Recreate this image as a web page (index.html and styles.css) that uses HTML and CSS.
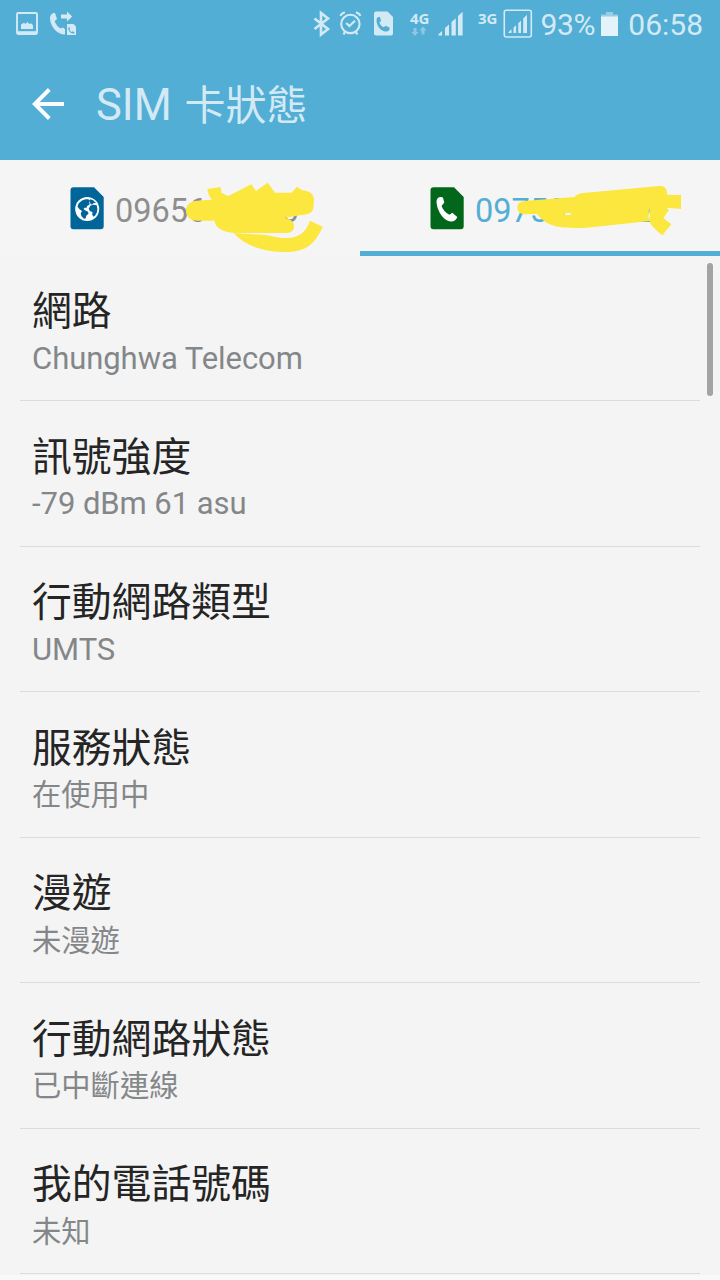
FILE: index.html
```html
<!DOCTYPE html>
<html lang="zh-Hant">
<head>
<meta charset="utf-8">
<title>SIM 卡狀態</title>
<link rel="stylesheet" href="styles.css">
</head>
<body>
<div class="screen">
  <header class="top">
    <div class="status">
      <svg class="status-icons" viewBox="0 0 540 48" width="540" height="48">
        <g fill="none" stroke="#d3eaf5">
          <rect x="17" y="13" width="20" height="21" rx="1.2" stroke-width="1.9"/>
          <path d="M17 32.7h20" stroke-width="3"/>
          <path d="M314.500 18.500l13.500 10.500-7 5.500V13l7 5.500-13.500 10.500" stroke-width="2.600"/>
          <circle cx="350.4" cy="23.9" r="9.2" stroke-width="2.100"/>
          <path d="M346.200 23l3.200 3 5.600-5.300M340.2 15.8q1.500-2.700 4.700-3.600M360.600 15.800q-1.500-2.700-4.700-3.600M345 31.800l-1.500 2.800M355.800 31.800l1.500 2.800" stroke-width="2.200"/>
          <rect x="504.300" y="10.300" width="27" height="26.700" rx="2" stroke-width="1.600"/>
        </g>
        <g fill="#d3eaf5">
          <path d="M21 29v-4.500l3-1.800 1.500 1.300 1.800-2 2 2 1.700-.8 2 2V29z"/>
          <path d="M53 13l2 0 2 6-2.300 2c.8 3.200 3.300 6 6 7.500l2.300-1 2 1.800v5.200c-7 .2-14.800-7-15-16.500 0-2 1-3.500 3-5z"/>
          <path d="M61 14.500h6v-3l5.200 5-5.200 5v-3h-6z"/>
          <path d="M67 24h6.500l2.500 2.500V35h-9z"/>
          <path d="M376 11.500h11.500l5.500 5.500V33.500q0 2-2 2H376q-2 0-2-2V13.500q0-2 2-2z"/>
          <path d="M438.500 35.500v-1.300l3.500-3.200v4.500zM445 35.500v-7.500l4-3.500v11zM451.500 35.500V22l4.300-3.800v17.300zM458 35.500v-19.500l4.600-4.200v23.700z"/>
          <path d="M508.500 33v-1l3-2.700V33zM513.500 33v-5.500l2.600-2.300V33zM518.300 33v-9.700l2.700-2.500V33zM523.200 33V18.500l3.800-3.700V33z"/>
        </g>
        <path transform="translate(376.500 17)" fill="#52aed5" d="M1.800 0l1.600 0 1.200 4-1.700 1.400c.7 2.200 2.400 4 4.500 4.800L9 8.700l4 1.700v2C12 14.500 9.500 15.200 7 14 2.500 12 .200 8 0 3.500 0 1.800.6.500 1.800 0z"/>
        <path transform="translate(68.300 27)" fill="#52aed5" d="M.8 0l1 2-.7.7c.5 1 1.300 1.900 2.300 2.300l.8-.7 1.900.9v1C3 7.500-.5 4 0 .8z"/>
        <path fill="#8ac8e3" d="M413.500 28h3v4h2.200l-3.700 4-3.700-4h2.200zM421.500 34.500h3v-4h2.200l-3.700-4-3.700 4h2.200z"/>
      </svg>
      <span class="net net-4g">4G</span>
      <span class="net net-3g">3G</span>
      <div class="readout">
        <span class="percent">93%</span>
        <svg class="battery" viewBox="0 0 17 24" width="17" height="24"><path fill="#96cee6" d="M5 0h7v2.500h5V5H0V2.500h5z"/><path fill="#e4f3f9" d="M0 4.500h17V24H0z"/></svg>
        <span class="clock">06:58</span>
      </div>
    </div>
    <div class="appbar">
      <svg class="back" viewBox="0 0 34 34" width="34" height="34"><path d="M18.300 2.500L3.800 17l14.500 14.500M4 17h29" fill="none" stroke="#fbfdfe" stroke-width="3.900"/></svg>
      <h1 class="title">SIM <span class="title-cjk">卡狀態</span></h1>
    </div>
  </header>
  <nav class="tabs">
    <div class="tab">
      <svg class="sim" viewBox="0 0 34 43" width="34" height="43">
        <path fill="#006699" d="M3.500 .3h20.500L33.700 10V39.300q0 3-3 3H3.500q-3 0-3-3V3.300q0-3 3-3z"/>
        <circle cx="17.200" cy="22" r="12" fill="#fff"/>
        <path fill="#006699" d="M15.500 12.300l-3.500 1.300-3.500 3-1 3.200 2 2.400 2.500 1.800-1.300 2.500.8 2.800 2.500 2.500 1.500-.3 1-3 2-1.800-.5-2-3-1.500-1.500-1.300 1.500-1.300 1.300.6.800-2.200 2.700-1.800-.8-2 .8-1.600-1.500-1.300zM20 12.300l2.800.8 3.200 2.900-2.800.3-1 1.400-1.700-.9-1-2zM20.500 18.500l3-.8 3.200.6.700 3.700-.6 3.600-1.600 2.900-1.800 1.200-1.200-2.200.3-2.600-2.500-.6-1.300-2.500z"/>
      </svg>
      <span class="number">09656<span class="last-a">6</span></span>
      <svg class="scribble scribble-a" viewBox="0 0 450 255" width="150" height="85">
        <g fill="#fbe73d">
          <path d="M82 42l40-6 2 17 21 10 69-35 14 20 35-25 22 30h50l16-18 15 11c20 0 36 11 36 29l-2 25q-4 16-20 18l-66 10c20 5 28 12 28 25 0 14-9 21-24 21H165c-38-3-61-17-61-37H52c-22 0-34-13-34-31 0-17 14-28 34-29l44-3q-12-12-14-32z"/>
          <path d="M161 174l97 6c55 14 90 13 111-8 10-9 16-21 21-35l38 18c-22 52-52 76-112 76-68 0-122-20-155-57z"/>
        </g>
      </svg>
    </div>
    <div class="tab tab-active">
      <svg class="sim" viewBox="0 0 34 43" width="34" height="43">
        <path fill="#03671b" d="M3.500 .3h20.500L33.700 10V39.300q0 3-3 3H3.500q-3 0-3-3V3.300q0-3 3-3z"/>
        <path fill="#fff" d="M9 10.300q3-.9 4 .5l1.300 4.700-2.800 3.500c1.500 4 4.300 7.200 8 8.700l2.800-1.900 5 4.200c-1.800 4.800-6.300 5.500-10.500 3.200C11.500 30.500 7 22.500 6.500 15c0-2 1-4 2.500-4.700z"/>
      </svg>
      <span class="number">09758<span class="last-b">2</span></span>
      <svg class="scribble scribble-b" viewBox="0 0 540 225" width="180" height="75">
        <g fill="#fbe73d">
          <path fill-rule="evenodd" d="M42 78l152-12q8-11 26-12l228-21c15-2 24 8 23 26l42 1v42l-44-4 8 7-17 24 24 19-27 33c-21-17-36-31-38-43l-162 17c-45 7-97 4-122-2-27-7-43-22-54-36l-36 1c-15-1-23-9-23-20s8-19 20-20zM163 120h17l5-7-22 2zM417 92l3 34-4 6z"/>
        </g>
      </svg>
    </div>
  </nav>
  <main class="list">
    <section class="row"><h2>網路</h2><p class="latin">Chunghwa Telecom</p></section>
    <section class="row"><h2>訊號強度</h2><p class="latin">-79 dBm 61 asu</p></section>
    <section class="row"><h2>行動網路類型</h2><p class="latin">UMTS</p></section>
    <section class="row"><h2>服務狀態</h2><p>在使用中</p></section>
    <section class="row"><h2>漫遊</h2><p>未漫遊</p></section>
    <section class="row"><h2>行動網路狀態</h2><p>已中斷連線</p></section>
    <section class="row"><h2>我的電話號碼</h2><p>未知</p></section>
    <div class="scrollbar"></div>
  </main>
</div>
</body>
</html>
```
FILE: styles.css
```css
* { box-sizing: border-box; }
body { margin: 0; font-family: Roboto, "Noto Sans CJK TC", sans-serif; }
h1, h2, p { margin: 0; font-weight: 400; }
.screen { width: 720px; height: 1280px; overflow: hidden; background: #f9f9f9; }
.top { height: 160px; background: #52aed5; }
.status { position: relative; height: 48px; display: flex; justify-content: flex-end; padding-right: 17px; color: #d3eaf5; }
.status-icons { position: absolute; left: 0; top: 0; }
.net { position: absolute; top: 9px; font: 700 15px/18px "Open Sans", "Noto Sans", sans-serif; }
.net-4g { left: 410px; }
.net-3g { left: 478px; }
.readout { display: flex; align-items: center; gap: 7px; font-size: 30px; line-height: 48px; padding-top: 1px; }
.percent { letter-spacing: -0.3px; }
.battery { flex: none; margin: 0 3px 2px -1px; }
.appbar { height: 112px; display: flex; align-items: center; padding-left: 31px; }
.back { flex: none; }
.title { margin: 4px 0 0 31px; font-size: 43.5px; line-height: 56px; color: #d3eaf5; display: flex; white-space: pre; }
.title-cjk { font-size: 41px; margin-left: 2px; }
.tabs { height: 96px; display: flex; background: #f5f5f5; }
.tab { position: relative; width: 360px; display: flex; align-items: flex-start; padding: 27px 0 0 70px; color: #8e8e8e; }
.tab-active { border-bottom: 5px solid #52aed5; color: #52aed5; }
.sim { flex: none; }
.number { margin: 2px 0 0 11px; font-size: 32.5px; line-height: 44px; display: flex; }
.last-a { margin-left: 74px; }
.last-b { margin-left: 71px; }
.scribble { position: absolute; top: 15px; }
.scribble-a { left: 180px; }
.scribble-b { left: 150px; }
.list { position: relative; }
.row { height: 145.5px; padding: 25px 32px 0; background: linear-gradient(#dcdcdc, #dcdcdc) 20px 100% / 680px 1.3px no-repeat #f4f4f4; }
.row h2 { font: 400 39.8px/54px "Noto Sans CJK TC", sans-serif; color: #252525; }
.row p { font: 400 29.3px/42px "Noto Sans CJK TC", sans-serif; color: #848789; margin-top: -0.5px; }
.row .latin { font-family: Roboto, sans-serif; font-size: 31px; letter-spacing: -0.05px; margin-top: 2.6px; }
.scrollbar { position: absolute; left: 707px; top: 7px; width: 6px; height: 133px; border-radius: 3px; background: #a2a3a5; }
```
